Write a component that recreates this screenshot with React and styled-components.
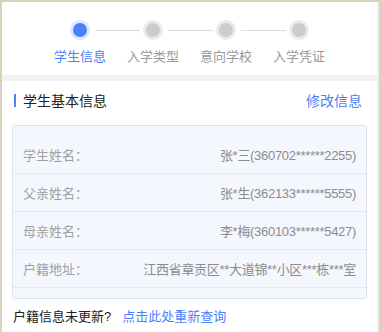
import React from 'react';
import styled, { createGlobalStyle } from 'styled-components';

const GlobalStyle = createGlobalStyle`
  html, body {
    margin: 0;
    padding: 0;
    background: #d9d3bd;
  }
  body {
    font-family: "Liberation Sans", "Noto Sans CJK SC", sans-serif;
  }
`;

const Frame = styled.div`
  height: 330px;
  margin: 2px 3px 0 2px;
  background: #fff;
  border-right: 2px solid #eceef2;
  overflow: hidden;
`;

// Stepper
const Stepper = styled.div`
  display: flex;
  justify-content: center;
  padding: 18px 0 9px;
  background: #fff;
`;

const Step = styled.div`
  position: relative;
  width: 73px;
  display: flex;
  flex-direction: column;
  align-items: center;
  &:not(:last-child)::after {
    content: '';
    position: absolute;
    top: 10px;
    left: 51px;
    width: 45px;
    height: 1px;
    background: #dcdcdc;
  }
`;

const Dot = styled.div`
  width: 20px;
  height: 20px;
  border-radius: 50%;
  background: ${(p) => (p.$active ? '#dce6ff' : '#ebebeb')};
  display: flex;
  align-items: center;
  justify-content: center;
  &::before {
    content: '';
    width: 14px;
    height: 14px;
    border-radius: 50%;
    background: ${(p) => (p.$active ? '#4d7ffe' : '#cccccc')};
  }
`;

const StepLabel = styled.div`
  margin-top: 8px;
  font-size: 13px;
  line-height: 18px;
  color: ${(p) => (p.$active ? '#4d7ffe' : '#999')};
  white-space: nowrap;
`;

const Gap = styled.div`
  height: 6px;
  background: #f2f2f2;
`;

// Section
const Section = styled.div`
  padding: 9px 10px 0;
`;

const TitleRow = styled.div`
  display: flex;
  align-items: center;
  justify-content: space-between;
  height: 20px;
  padding: 0 5px 0 2px;
`;

const Title = styled.div`
  display: flex;
  align-items: center;
  font-size: 14px;
  color: #222;
  &::before {
    content: '';
    width: 2px;
    height: 13px;
    margin-right: 7px;
    background: #4d7ffe;
  }
`;

const Link = styled.a`
  font-size: 14px;
  color: #4d7ffe;
  text-decoration: none;
`;

const Card = styled.div`
  margin-top: 15px;
  padding: 10px 0;
  background: #f5f7fe;
  border: 1px solid #dfe2e8;
  border-radius: 3px;
`;

const Row = styled.div`
  display: flex;
  align-items: center;
  justify-content: space-between;
  height: 37px;
  padding: 0 10px;
  border-bottom: 1px solid #e6e8ee;
  font-size: 13px;
`;

const Label = styled.span`
  color: #a0a0a0;
`;

const Value = styled.span`
  color: #8c8c8c;
  white-space: nowrap;
  letter-spacing: -0.3px;
`;

const Footer = styled.div`
  margin-top: 8px;
  padding-left: 1px;
  font-size: 13px;
  line-height: 20px;
  color: #222;
`;

const FooterLink = styled.a`
  margin-left: 11px;
  color: #4d7ffe;
  text-decoration: none;
`;

const steps = ['学生信息', '入学类型', '意向学校', '入学凭证'];

const rows = [
  ['学生姓名：', '张*三(360702******2255)'],
  ['父亲姓名：', '张*生(362133******5555)'],
  ['母亲姓名：', '李*梅(360103******5427)'],
  ['户籍地址：', '江西省章贡区**大道锦**小区***栋***室'],
];

export default function App() {
  return (
    <>
      <GlobalStyle />
      <Frame>
        <Stepper>
          {steps.map((s, i) => (
            <Step key={s}>
              <Dot $active={i === 0} />
              <StepLabel $active={i === 0}>{s}</StepLabel>
            </Step>
          ))}
        </Stepper>
        <Gap />
        <Section>
          <TitleRow>
            <Title>学生基本信息</Title>
            <Link>修改信息</Link>
          </TitleRow>
          <Card>
            {rows.map(([label, value]) => (
              <Row key={label}>
                <Label>{label}</Label>
                <Value>{value}</Value>
              </Row>
            ))}
          </Card>
          <Footer>
            户籍信息未更新?
            <FooterLink>点击此处重新查询</FooterLink>
          </Footer>
        </Section>
      </Frame>
    </>
  );
}
